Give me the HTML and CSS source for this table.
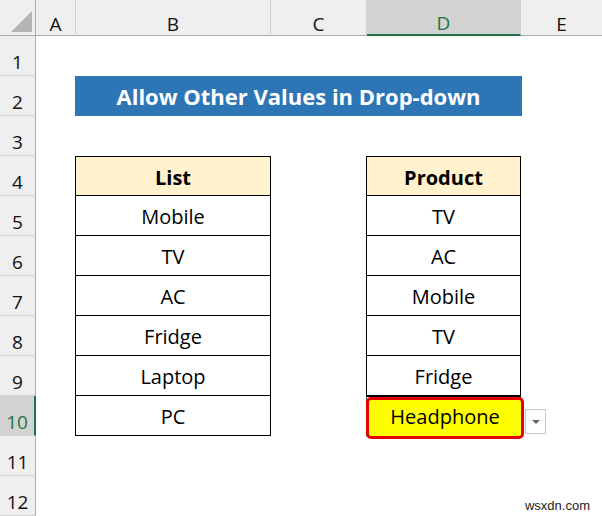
FILE: index.html
```html
<!DOCTYPE html>
<html>
<head>
<meta charset="utf-8">
<link rel="stylesheet" href="styles.css">
</head>
<body>
<div class="sheet">
  <div class="corner"><span class="tri"></span></div>
  <div class="colh">A</div>
  <div class="colh">B</div>
  <div class="colh">C</div>
  <div class="colh sel">D</div>
  <div class="colh last">E</div>

  <div class="rowh">1</div><div></div><div></div><div></div><div></div><div></div>

  <div class="rowh">2</div><div></div><div class="title">Allow Other Values in Drop-down</div><div></div>

  <div class="rowh">3</div><div></div><div></div><div></div><div></div><div></div>

  <div class="rowh">4</div><div></div><div class="cell head top">List</div><div></div><div class="cell head top">Product</div><div></div>
  <div class="rowh">5</div><div></div><div class="cell">Mobile</div><div></div><div class="cell">TV</div><div></div>
  <div class="rowh">6</div><div></div><div class="cell">TV</div><div></div><div class="cell">AC</div><div></div>
  <div class="rowh">7</div><div></div><div class="cell">AC</div><div></div><div class="cell">Mobile</div><div></div>
  <div class="rowh">8</div><div></div><div class="cell">Fridge</div><div></div><div class="cell">TV</div><div></div>
  <div class="rowh">9</div><div></div><div class="cell">Laptop</div><div></div><div class="cell">Fridge</div><div></div>
  <div class="rowh sel">10</div><div></div><div class="cell">PC</div><div></div>
  <div class="active">
    <div class="hl">Headphone</div>
    <div class="dd"><span class="arrow"></span></div>
  </div>
  <div></div>
  <div class="rowh">11</div><div></div><div></div><div></div><div></div><div></div>
  <div class="rowh">12</div><div></div><div></div><div></div><div></div><div></div>
</div>
<div class="wm">wsxdn.com</div>
</body>
</html>
```

FILE: styles.css
```css
html, body {
  margin: 0;
  padding: 0;
  background: #ffffff;
}
body {
  width: 602px;
  height: 516px;
  overflow: hidden;
  position: relative;
  font-family: "Open Sans", "Noto Sans", sans-serif;
  color: #000;
}
.sheet {
  display: grid;
  grid-template-columns: 36px 40px 195px 96px 154px 81px;
  grid-template-rows: 36px repeat(12, 40px);
}
.corner {
  background: #efefef;
  border-right: 1px solid #ababab;
  border-bottom: 1px solid #ababab;
  position: relative;
}
.tri {
  position: absolute;
  right: 3px;
  bottom: 3px;
  width: 0;
  height: 0;
  border-left: 21px solid transparent;
  border-bottom: 21px solid #b5b5b5;
}
.colh {
  background: #efefef;
  border-bottom: 1px solid #ababab;
  border-right: 1px solid #d0d0d0;
  display: flex;
  align-items: center;
  justify-content: center;
  box-sizing: border-box;
  font-size: 19px;
  color: #111;
  padding-top: 12px;
}
.colh.last { border-right: none; }
.colh.sel {
  background: #d3d3d3;
  color: #217346;
  border-bottom: 2px solid #217346;
  padding-top: 11px;
}
.rowh {
  background: #efefef;
  border-right: 1px solid #ababab;
  border-bottom: 1px solid #d0d0d0;
  box-sizing: border-box;
  display: flex;
  align-items: center;
  justify-content: center;
  font-size: 19px;
  color: #111;
  padding-top: 12px;
}
.rowh.sel {
  background: #d3d3d3;
  color: #217346;
  border-right: 2px solid #217346;
}
.title {
  grid-column: span 3;
  background: #2e75b6;
  color: #fff;
  font-weight: 700;
  font-size: 22px;
  display: flex;
  align-items: center;
  justify-content: center;
  margin-left: -1px;
  margin-right: -1px;
}
.cell {
  border: 1px solid #000;
  border-top: none;
  margin-left: -1px;
  display: flex;
  align-items: center;
  justify-content: center;
  font-size: 20px;
  box-sizing: border-box;
  padding-top: 2px;
}
.cell.top { border-top: 1px solid #000; }
.cell.head {
  background: #fff2cc;
  font-weight: 700;
}
.active {
  position: relative;
  margin-left: -1px;
  border: 1px solid #1e6b3e;
  border-top: 1px solid #000;
  box-sizing: border-box;
}
.hl {
  position: absolute;
  left: -1px;
  top: 0px;
  width: 158px;
  height: 42px;
  box-sizing: border-box;
  background: #ffff00;
  border: 3px solid #e60000;
  border-radius: 5px;
  display: flex;
  align-items: center;
  justify-content: center;
  font-size: 20px;
  padding-bottom: 3px;
}
.dd {
  position: absolute;
  left: 158px;
  top: 12px;
  width: 21px;
  height: 25px;
  box-sizing: border-box;
  background: #fff;
  border: 1px solid #c8c8c8;
  display: flex;
  align-items: center;
  justify-content: center;
}
.arrow {
  width: 0;
  height: 0;
  border-left: 4px solid transparent;
  border-right: 4px solid transparent;
  border-top: 4px solid #666;
}
.wm {
  position: absolute;
  right: 12px;
  bottom: 3px;
  font-family: "Liberation Sans", Arial, sans-serif;
  font-size: 13px;
  color: #222;
}
```
